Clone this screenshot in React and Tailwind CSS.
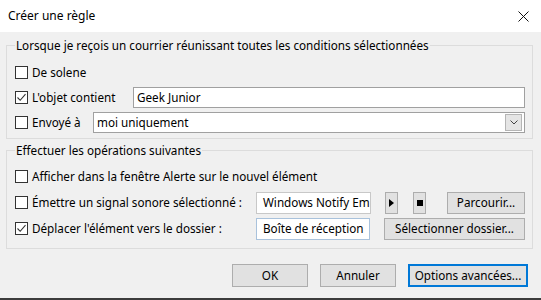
import React from 'react';

function Check({ checked }) {
  return (
    <span className="w-[13px] h-[13px] border border-[#333333] bg-white flex items-center justify-center shrink-0">
      {checked && (
        <svg width="11" height="11" viewBox="0 0 11 11">
          <path d="M1.5 5.5 L4.2 8.3 L9.5 2.2" fill="none" stroke="#333" strokeWidth="1.1" />
        </svg>
      )}
    </span>
  );
}

function CheckLabel({ checked, children, width }) {
  return (
    <div className={`flex items-center gap-[4px] shrink-0 ${width}`}>
      <Check checked={checked} />
      <span>{children}</span>
    </div>
  );
}

export default function App() {
  return (
    <div className="w-[541px] h-[300px] flex flex-col bg-[#f0f0f0] text-black text-[11.7px] font-['Noto_Sans',sans-serif] overflow-hidden">
      {/* barre de titre */}
      <div className="h-[32px] bg-white flex items-center justify-between pl-[8px] pr-[12px] shrink-0">
        <span className="text-[12px]">Créer une règle</span>
        <svg width="11" height="11" viewBox="0 0 11 11">
          <path d="M0.5 0.5 L10.5 10.5 M10.5 0.5 L0.5 10.5" stroke="#111" strokeWidth="1" />
        </svg>
      </div>

      {/* conditions */}
      <fieldset className="mt-[5px] ml-[6px] mr-[8px] border border-[#dcdcdc] pl-[8px] pr-[7px] pb-[3px]">
        <legend className="px-[1px] leading-[16px]">Lorsque je reçois un courrier réunissant toutes les conditions sélectionnées</legend>
        <div className="pt-[7px] flex flex-col">
          <div className="h-[25px] flex items-center">
            <CheckLabel checked={false}>De solene</CheckLabel>
          </div>
          <div className="h-[25px] flex items-center">
            <CheckLabel checked width="w-[118px]">L'objet contient</CheckLabel>
            <div className="flex-1 h-[21px] bg-white border border-[#a0a0a0] flex items-center pl-[3px]">Geek Junior</div>
          </div>
          <div className="h-[25px] flex items-center">
            <CheckLabel checked={false} width="w-[78px]">Envoyé à</CheckLabel>
            <div className="flex-1 h-[21px] bg-white border border-[#a0a0a0] flex items-center justify-between pl-[3px] pr-[2px]">
              <span>moi uniquement</span>
              <span className="w-[17px] h-[17px] bg-[#e5e5e5] border border-[#b5b5b5] flex items-center justify-center">
                <svg width="8" height="5" viewBox="0 0 8 5">
                  <path d="M0.5 0.5 L4 4 L7.5 0.5" fill="none" stroke="#444" strokeWidth="1" />
                </svg>
              </span>
            </div>
          </div>
        </div>
      </fieldset>

      {/* actions */}
      <fieldset className="mt-[3px] ml-[6px] mr-[8px] border border-[#dcdcdc] pl-[8px] pr-[7px] pb-[6px]">
        <legend className="px-[1px] leading-[16px]">Effectuer les opérations suivantes</legend>
        <div className="pt-[6px] flex flex-col">
          <div className="h-[26px] flex items-center">
            <CheckLabel checked={false}>Afficher dans la fenêtre Alerte sur le nouvel élément</CheckLabel>
          </div>
          <div className="h-[26px] flex items-center">
            <CheckLabel checked={false} width="w-[241px]">Émettre un signal sonore sélectionné :</CheckLabel>
            <div className="w-[115px] h-[22px] bg-white border border-[#c8c8c8] flex items-center pl-[6px] overflow-hidden whitespace-nowrap">Windows Notify Em</div>
            <button className="ml-[14px] w-[13px] h-[22px] bg-[#e1e1e1] border border-[#adadad] flex items-center justify-center">
              <svg width="5" height="8" viewBox="0 0 5 8"><path d="M0 0 L5 4 L0 8 Z" fill="#000" /></svg>
            </button>
            <button className="ml-[15px] w-[13px] h-[22px] bg-[#e1e1e1] border border-[#adadad] flex items-center justify-center">
              <span className="w-[6px] h-[6px] bg-black"></span>
            </button>
            <button className="ml-[21px] flex-1 h-[22px] bg-[#e1e1e1] border border-[#adadad]">Parcourir...</button>
          </div>
          <div className="h-[26px] flex items-center">
            <CheckLabel checked width="w-[241px]">Déplacer l'élément vers le dossier :</CheckLabel>
            <div className="w-[114px] h-[22px] bg-white border border-[#a9c2dc] flex items-center pl-[6px] whitespace-nowrap">Boîte de réception</div>
            <button className="ml-[14px] flex-1 h-[22px] bg-[#e1e1e1] border border-[#adadad]">Sélectionner dossier...</button>
          </div>
        </div>
      </fieldset>

      {/* boutons */}
      <div className="mt-[15px] flex justify-end gap-[12px] pr-[13px]">
        <button className="w-[76px] h-[23px] bg-[#e1e1e1] border border-[#adadad]">OK</button>
        <button className="w-[76px] h-[23px] bg-[#e1e1e1] border border-[#adadad]">Annuler</button>
        <button className="w-[120px] h-[23px] bg-[#e1e1e1] border-2 border-[#0078d7]">Options avancées...</button>
      </div>
      <div className="flex-1"></div>
      <div className="h-[2px] bg-[#3c3c3c] shrink-0"></div>
    </div>
  );
}
